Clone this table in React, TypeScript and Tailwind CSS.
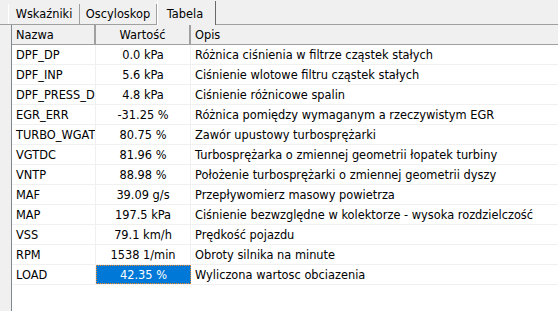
import React from 'react';

const rows = [
  { name: 'DPF_DP', value: '0.0 kPa', desc: 'Różnica ciśnienia w filtrze cząstek stałych' },
  { name: 'DPF_INP', value: '5.6 kPa', desc: 'Ciśnienie wlotowe filtru cząstek stałych' },
  { name: 'DPF_PRESS_D', value: '4.8 kPa', desc: 'Ciśnienie różnicowe spalin' },
  { name: 'EGR_ERR', value: '-31.25 %', desc: 'Różnica pomiędzy wymaganym a rzeczywistym EGR' },
  { name: 'TURBO_WGAT', value: '80.75 %', desc: 'Zawór upustowy turbosprężarki' },
  { name: 'VGTDC', value: '81.96 %', desc: 'Turbosprężarka o zmiennej geometrii łopatek turbiny' },
  { name: 'VNTP', value: '88.98 %', desc: 'Położenie turbosprężarki o zmiennej geometrii dyszy' },
  { name: 'MAF', value: '39.09 g/s', desc: 'Przepływomierz masowy powietrza' },
  { name: 'MAP', value: '197.5 kPa', desc: 'Ciśnienie bezwzględne w kolektorze - wysoka rozdzielczość' },
  { name: 'VSS', value: '79.1 km/h', desc: 'Prędkość pojazdu' },
  { name: 'RPM', value: '1538 1/min', desc: 'Obroty silnika na minute' },
  { name: 'LOAD', value: '42.35 %', desc: 'Wyliczona wartosc obciazenia', selected: true },
];

const App = () => {
  return <div className="w-[558px] h-[311px] bg-[#f0f0f0] overflow-hidden flex flex-col text-[11.4px] text-black" style={{ fontFamily: '"DejaVu Sans", Tahoma, sans-serif' }}>
      {/* Tab strip */}
      <div className="h-[25px] flex items-end pl-[8px] border-b border-[#a0a0a0] shrink-0">
        <div className="w-[72px] h-[20px] flex items-center justify-center pt-[2px] border-l border-white border-r border-r-[#a0a0a0] whitespace-nowrap">Wskaźniki</div>
        <div className="w-[77px] h-[20px] flex items-center justify-center pt-[2px] border-r border-[#a0a0a0] whitespace-nowrap">Oscyloskop</div>
        <div className="w-[59px] h-[24px] flex items-start justify-center pt-[5px] pr-[3px] -mb-px bg-[#f0f0f0] border-r border-[#696969] border-l border-l-white whitespace-nowrap">Tabela</div>
      </div>
      {/* Grid */}
      <div className="flex-1 ml-[11px] bg-white border-l border-[#828790] flex flex-col">
        <div className="h-[20px] flex bg-[#f0f0f0] border-b border-[#a0a0a0] shrink-0">
          <div className="w-[84px] pl-[4px] pt-[2px] flex items-center border-r-2 border-[#a0a0a0]">Nazwa</div>
          <div className="w-[95px] pt-[2px] flex items-center justify-center border-r-2 border-[#a0a0a0]">Wartość</div>
          <div className="flex-1 pl-[4px] pt-[2px] flex items-center">Opis</div>
        </div>
        {rows.map(r => <div key={r.name} className="h-[20px] flex border-b border-[#f0f0f0] shrink-0">
            <div className="w-[84px] pl-[4px] pt-[2px] flex items-center border-r border-[#f0f0f0] overflow-hidden whitespace-nowrap">{r.name}</div>
            <div className={r.selected ? 'w-[95px] pt-[2px] flex items-center justify-center bg-[#0078d7] text-white outline-1 outline-dotted outline-[#f08a24] -outline-offset-1' : 'w-[95px] pt-[2px] flex items-center justify-center border-r border-[#f0f0f0] whitespace-nowrap'}>{r.value}</div>
            <div className="flex-1 pl-[4px] pt-[2px] flex items-center whitespace-nowrap overflow-hidden">{r.desc}</div>
          </div>)}
      </div>
    </div>;
};

export default App;
